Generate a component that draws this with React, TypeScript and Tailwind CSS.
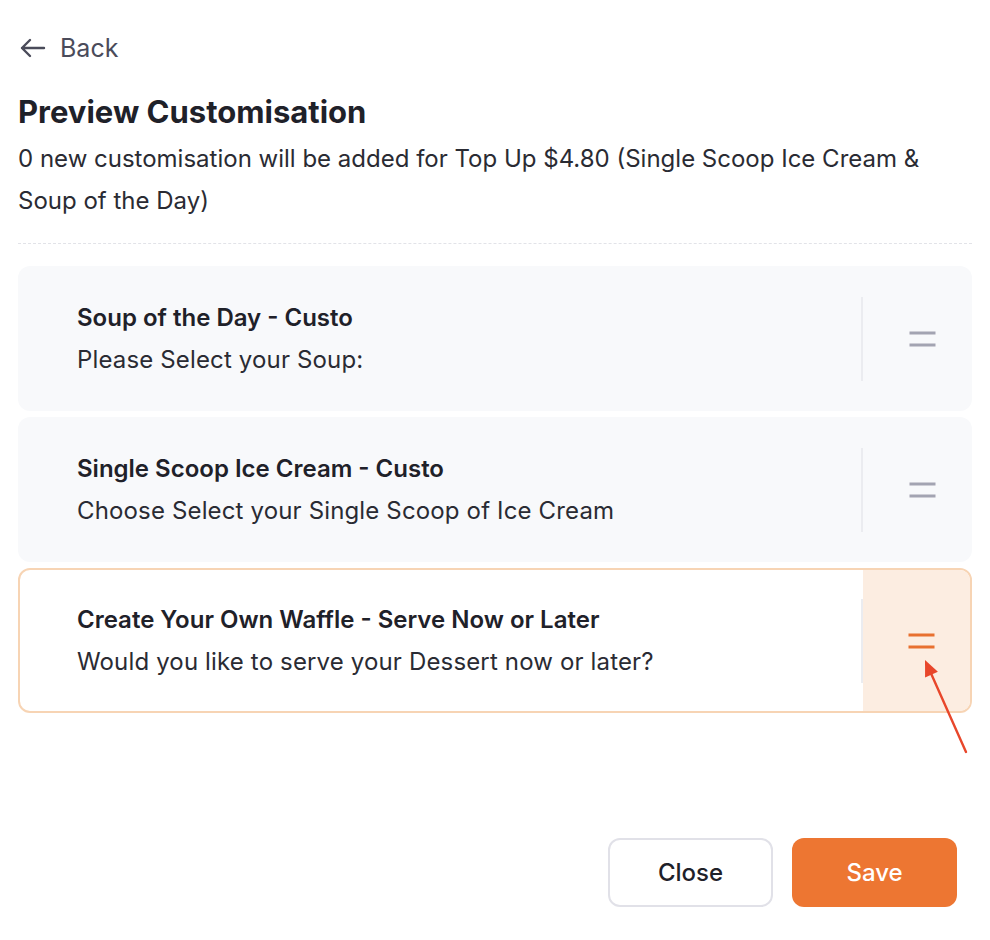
import React from "react";

const cards = [
  { title: "Soup of the Day - Custo", sub: "Please Select your Soup:", active: false },
  { title: "Single Scoop Ice Cream - Custo", sub: "Choose Select your Single Scoop of Ice Cream", active: false },
  { title: "Create Your Own Waffle - Serve Now or Later", sub: "Would you like to serve your Dessert now or later?", active: true },
];

function Handle({ color }: { color: string }) {
  return (
    <svg width="27" height="16" viewBox="0 0 27 16">
      <line x1="0.5" y1="2" x2="26.5" y2="2" stroke={color} strokeWidth="3" />
      <line x1="0.5" y1="14" x2="26.5" y2="14" stroke={color} strokeWidth="3" />
    </svg>
  );
}

export default function App() {
  return (
    <div className="relative w-[990px] h-[940px] bg-white font-['Inter',sans-serif] text-[#1f2129]">
      <div className="px-[18px] pt-[33px]">
        <div className="flex items-center gap-[14px] text-[#4a4b5a]">
          <svg width="27" height="20" viewBox="0 0 27 20" className="ml-[1px]">
            <path d="M25 10H3M11 2L3 10l8 8" fill="none" stroke="#4a4b5a" strokeWidth="2.4" strokeLinecap="round" strokeLinejoin="round" />
          </svg>
          <span className="text-[25px] leading-[30px]">Back</span>
        </div>
        <h1 className="mt-[31px] text-[31px] leading-[36px] font-bold">Preview Customisation</h1>
        <p className="mt-[8px] text-[24px] leading-[42px] text-[#2a2b33] pr-[30px]">
          0 new customisation will be added for Top Up $4.80 (Single Scoop Ice Cream &amp; Soup of the Day)
        </p>
        <div className="mt-[21px] border-t border-dashed border-[#e2e3e8]" />
        <div className="mt-[22px] flex flex-col gap-[6px]">
          {cards.map((c) => (
            <div
              key={c.title}
              className={
                c.active
                  ? "flex h-[145px] rounded-[12px] border-2 border-[#f7d4b4] bg-white overflow-hidden"
                  : "flex h-[145px] rounded-[12px] bg-[#f8f9fb] overflow-hidden"
              }
            >
              <div className={c.active ? "flex-1 flex flex-col justify-center pl-[57px]" : "flex-1 flex flex-col justify-center pl-[59px]"}>
                <div className="text-[24px] leading-[42px] font-semibold">{c.title}</div>
                <div className="text-[24px] leading-[42px] text-[#2a2b33] tracking-[0.15px]">{c.sub}</div>
              </div>
              <div className="flex items-center">
                <div className="w-[2px] h-[84px] bg-[#ebecf0]" />
              </div>
              <div
                className={
                  c.active
                    ? "w-[107px] flex items-center justify-center pl-[10px] bg-[#fcede1]"
                    : "w-[109px] flex items-center justify-center pl-[10px]"
                }
              >
                <Handle color={c.active ? "#e8702f" : "#a3a4b2"} />
              </div>
            </div>
          ))}
        </div>
      </div>
      <svg className="absolute left-[915px] top-[650px]" width="60" height="110" viewBox="0 0 60 110">
        <line x1="51" y1="102" x2="16.5" y2="24.6" stroke="#e8472b" strokeWidth="2.4" strokeLinecap="round" />
        <polygon points="10,10 22.9,21.75 10.1,27.45" fill="#e8472b" />
      </svg>
      <div className="absolute right-[33px] top-[838px] flex gap-[19px]">
        <button className="w-[165px] h-[69px] rounded-[12px] border-2 border-[#e1e1e8] bg-white text-[24px] font-medium text-[#1f2129]">
          Close
        </button>
        <button className="w-[165px] h-[69px] rounded-[12px] bg-[#ed7632] text-[24px] font-medium text-white">
          Save
        </button>
      </div>
    </div>
  );
}
